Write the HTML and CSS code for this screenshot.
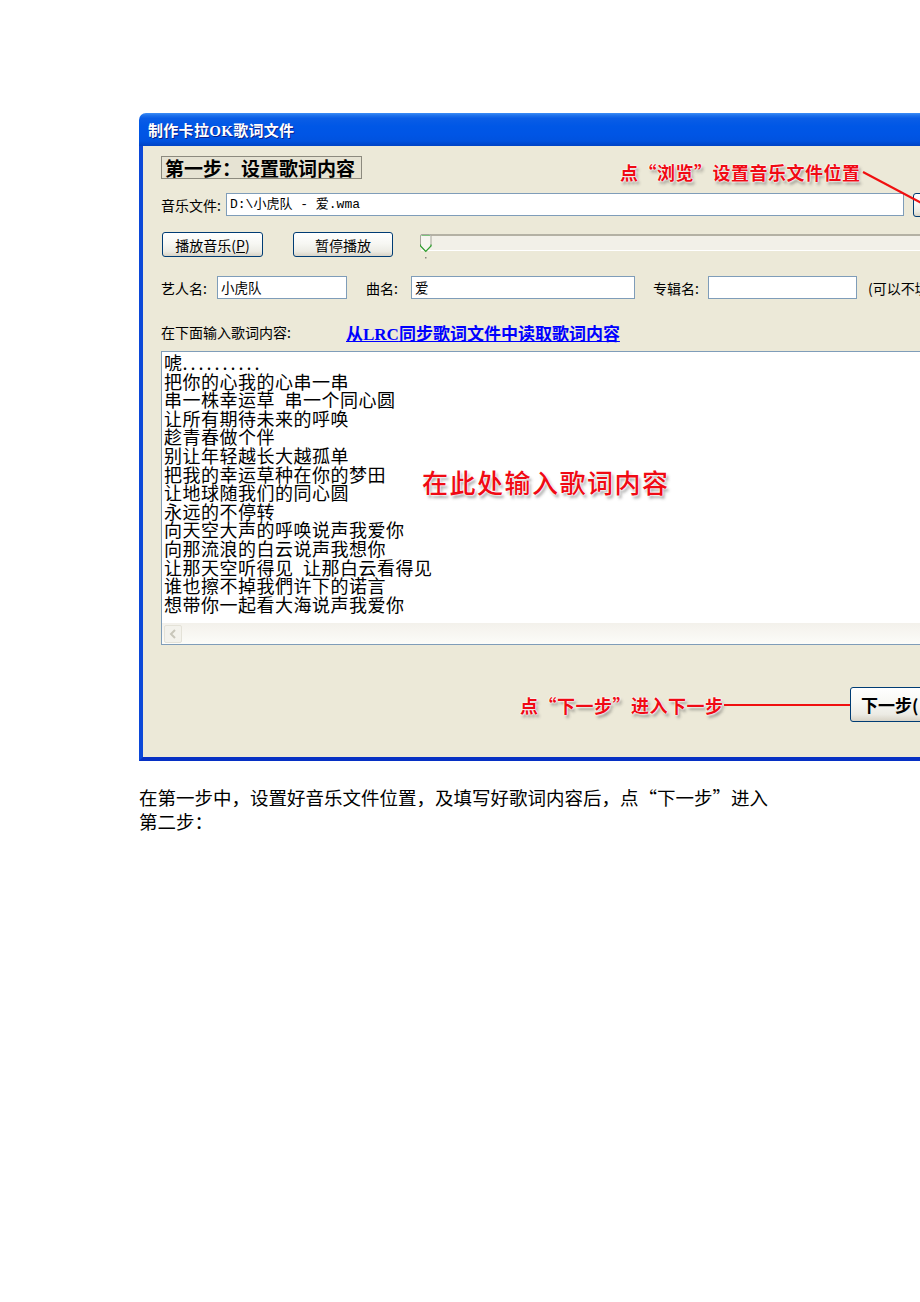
FILE: index.html
```html
<!DOCTYPE html>
<html lang="zh-CN">
<head>
<meta charset="utf-8">
<title>制作卡拉OK歌词文件</title>
<link rel="stylesheet" href="styles.css">
</head>
<body>
<div class="doc">
  <div class="shot">
    <div class="window">
      <div class="titlebar"><span class="title">制作卡拉OK歌词文件</span></div>
      <div class="client">
        <div class="row step-row">
          <div class="step">第一步：设置歌词内容</div>
        </div>
        <div class="row file-row">
          <span class="lbl lbl-file">音乐文件:</span>
          <div class="input file-input">D:\小虎队 - 爱.wma</div>
          <div class="btn browse"></div>
        </div>
        <div class="row play-row">
          <div class="btn play">播放音乐(<u>P</u>)</div>
          <div class="btn pause">暂停播放</div>
          <div class="slider">
            <svg class="thumb" width="12" height="26" viewBox="0 0 12 26">
              <path d="M0.5 2 Q0.5 0.5 2 0.5 H9.5 Q11 0.5 11 2 V12 L5.75 17.5 L0.5 12 Z" fill="#F6F5EF" stroke="#A7A69C"/>
              <path d="M1.5 1.5 H10" stroke="#7FC27F" stroke-width="1"/>
              <path d="M0.5 10.5 V12 L5.75 17.5 L11 12 V10.5" fill="none" stroke="#2FA12F" stroke-width="1.2"/>
              <rect x="5" y="23" width="1.5" height="1.5" fill="#8C8A80"/>
            </svg>
            <div class="track"></div>
          </div>
        </div>
        <div class="row meta-row">
          <span class="lbl lbl-artist">艺人名:</span>
          <div class="input artist-input">小虎队</div>
          <span class="lbl lbl-song">曲名:</span>
          <div class="input song-input">爱</div>
          <span class="lbl lbl-album">专辑名:</span>
          <div class="input album-input"></div>
          <span class="lbl lbl-opt">(可以不填</span>
        </div>
        <div class="row lbl-row">
          <span class="lbl lbl-lyrics">在下面输入歌词内容:</span>
          <a class="link" href="#">从<span class="latin">LRC</span>同步歌词文件中读取歌词内容</a>
        </div>
        <div class="lyrics">
          <div class="lyrics-text">
            <div>唬<span class="dots">..........</span></div>
            <div>把你的心我的心串一串</div>
            <div>串一株幸运草&ensp;串一个同心圆</div>
            <div>让所有期待未来的呼唤</div>
            <div>趁青春做个伴</div>
            <div>别让年轻越长大越孤单</div>
            <div>把我的幸运草种在你的梦田</div>
            <div>让地球随我们的同心圆</div>
            <div>永远的不停转</div>
            <div>向天空大声的呼唤说声我爱你</div>
            <div>向那流浪的白云说声我想你</div>
            <div>让那天空听得见&ensp;让那白云看得见</div>
            <div>谁也擦不掉我們许下的诺言</div>
            <div>想带你一起看大海说声我爱你</div>
          </div>
          <div class="hscroll">
            <div class="sb-btn">
              <svg width="8" height="10" viewBox="0 0 8 10"><path d="M6 1 L2 5 L6 9" fill="none" stroke="#C8C6BA" stroke-width="2"/></svg>
            </div>
          </div>
        </div>
        <div class="row bottom-row">
          <span class="note note-next">点“下一步”进入下一步</span>
          <span class="lead"></span>
          <div class="btn next">下一步(</div>
        </div>
      </div>
    </div>
    <div class="note note-browse">点“浏览”设置音乐文件位置</div>
    <svg class="arrow" width="781" height="120" viewBox="0 0 781 120">
      <line x1="724" y1="59" x2="790" y2="94" stroke="#F01010" stroke-width="2.2"/>
    </svg>
    <div class="note note-big">在此处输入歌词内容</div>
  </div>
  <p class="caption">在第一步中，设置好音乐文件位置，及填写好歌词内容后，点“下一步”进入<br>第二步：</p>
</div>
</body>
</html>
```

FILE: styles.css
```css
* { box-sizing: border-box; }

html, body {
  margin: 0;
  padding: 0;
  background: #ffffff;
}

body {
  font-family: "Noto Sans CJK SC", "DejaVu Sans", sans-serif;
  color: #000;
  overflow: hidden;
}

.doc {
  padding-top: 113px;
}

.shot {
  position: relative;
  margin-left: 139px;
  width: 781px;
  overflow: hidden;
}

.window {
  width: 830px;
}

.titlebar {
  height: 33px;
  border-radius: 7px 7px 0 0;
  background: linear-gradient(to bottom,
    #3E8EF6 0%, #1F72EC 7%, #0A5DE6 16%, #0057E6 40%,
    #0055E5 65%, #0052DF 85%, #0043C4 100%);
  padding-left: 9px;
  display: flex;
  align-items: center;
}

.title {
  color: #fff;
  font-family: "Liberation Serif", "Noto Sans CJK SC", serif;
  font-weight: 700;
  font-size: 15px;
  letter-spacing: 0.3px;
  text-shadow: 1px 1px 0 #0A1F8C;
}

.client {
  height: 615px;
  background: #ECE9D8;
  border-left: 4px solid #0B48D8;
  border-bottom: 4px solid #0630C4;
  padding-left: 18px;
  display: flex;
  flex-direction: column;
}

.row {
  display: flex;
  align-items: center;
  flex: none;
}

.lbl {
  font-size: 14px;
  white-space: nowrap;
  flex: none;
}

.input {
  height: 23px;
  background: #fff;
  border: 1px solid #7F9DB9;
  font-size: 13.5px;
  line-height: 21px;
  padding-left: 3px;
  white-space: nowrap;
  flex: none;
}

.btn {
  flex: none;
  border: 1px solid #003C74;
  border-radius: 3px;
  background: linear-gradient(to bottom, #FFFFFF 0%, #F7F7F3 45%, #ECEBE4 80%, #D8D3C6 100%);
  display: flex;
  align-items: center;
  justify-content: center;
  font-size: 14px;
  white-space: nowrap;
}

/* step heading */
.step-row { margin-top: 10px; height: 23px; }
.step {
  height: 23px;
  width: 201px;
  border: 1px solid #8C8A7E;
  background: #E6E3D3;
  font-size: 19px;
  font-weight: 700;
  line-height: 21px;
  padding-left: 3px;
  white-space: nowrap;
}

/* file row */
.file-row { margin-top: 14px; height: 23px; }
.lbl-file { width: 65px; }
.file-input {
  width: 678px;
  font-family: "Liberation Mono", "Noto Sans CJK SC", monospace;
  font-size: 13px;
}
.browse { margin-left: 9px; width: 80px; height: 24px; }

/* play row */
.play-row { margin-top: 16px; height: 25px; align-items: flex-start; }
.play { width: 101px; height: 25px; margin-left: 1px; }
.pause { width: 100px; height: 25px; margin-left: 30px; }
.slider {
  margin-left: 27px;
  margin-top: 2px;
  display: flex;
  align-items: flex-start;
}
.thumb { flex: none; position: relative; z-index: 1; }
.track {
  width: 500px;
  height: 17px;
  margin-left: -11px;
  background: #F2F0E8;
  border-top: 2px solid #B4B1A4;
  border-bottom: 1px solid #FFFFFF;
}

/* meta row */
.meta-row { margin-top: 19px; height: 23px; }
.lbl-artist { width: 56px; }
.artist-input { width: 130px; }
.lbl-song { margin-left: 19px; width: 45px; }
.song-input { width: 224px; }
.lbl-album { margin-left: 18px; width: 55px; }
.album-input { width: 149px; }
.lbl-opt { margin-left: 11px; }

/* lyrics label row */
.lbl-row { margin-top: 23px; height: 20px; }
.lbl-lyrics { width: 185px; }
.link {
  color: #0000FF;
  font-weight: 700;
  font-size: 17px;
  text-decoration: underline;
  white-space: nowrap;
}
.latin { font-family: "Liberation Serif", serif; }

/* lyrics box */
.lyrics {
  margin-top: 9px;
  height: 294px;
  width: 800px;
  flex: none;
  background: #fff;
  border: 1px solid #7F9DB9;
  display: flex;
  flex-direction: column;
}
.lyrics-text {
  flex: 1;
  padding: 1px 0 0 2px;
  font-size: 18px;
  line-height: 18.6px;
  letter-spacing: 0.5px;
  white-space: nowrap;
}
.dots { letter-spacing: 3px; }
.hscroll {
  height: 21px;
  flex: none;
  background: linear-gradient(to bottom, #F3F1EB, #FCFCF9);
  display: flex;
  align-items: center;
  padding-left: 2px;
}
.sb-btn {
  width: 18px;
  height: 18px;
  border: 1px solid #E4E2D8;
  border-radius: 2px;
  background: #F3F2EC;
  display: flex;
  align-items: center;
  justify-content: center;
}

/* bottom row */
.bottom-row { margin-top: 42px; height: 35px; }
.note {
  color: #F00A14;
  font-weight: 700;
  white-space: nowrap;
  text-shadow: 0 0 1px #fff, 0 0 2px #fff, 0 0 2px #fff, 2px 3px 3px rgba(60, 60, 60, 0.45);
}
.note-next {
  margin-left: 359px;
  width: 204px;
  font-size: 18px;
  letter-spacing: 0.5px;
  flex: none;
}
.lead {
  width: 126px;
  height: 2px;
  margin-top: 1px;
  background: #F01010;
  flex: none;
}
.next {
  width: 100px;
  height: 35px;
  justify-content: flex-start;
  padding-left: 10px;
  font-size: 17px;
  font-weight: 700;
}

/* overlays */
.note-browse {
  position: absolute;
  left: 481px;
  top: 47px;
  font-size: 18px;
  line-height: 24px;
  letter-spacing: 0.5px;
}
.arrow {
  position: absolute;
  left: 0;
  top: 0;
  pointer-events: none;
}
.note-big {
  position: absolute;
  left: 283px;
  top: 354px;
  font-size: 26px;
  line-height: 30px;
  letter-spacing: 1.5px;
  font-weight: 500;
}

/* caption */
.caption {
  margin: 24px 0 0 139px;
  font-size: 18.5px;
  line-height: 24px;
  white-space: nowrap;
}
```
